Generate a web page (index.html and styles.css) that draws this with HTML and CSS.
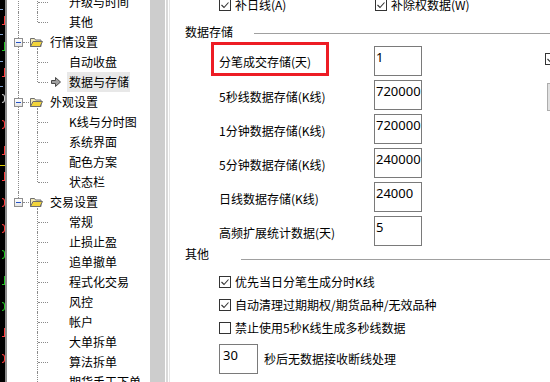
FILE: index.html
```html
<!DOCTYPE html>
<html lang="zh-CN">
<head>
    <meta charset="UTF-8">
    <meta name="viewport" content="width=device-width, initial-scale=1.0">
    <title>系统设置 - 数据与存储</title>
    <link rel="stylesheet" href="styles.css">
</head>
<body>
    <!-- обрезанная колонка котировок слева -->
    <div class="quote-strip">
        <div class="q red"></div>
        <div class="q green"></div>
        <div class="q red"></div>
        <div class="q white round"></div>
        <div class="q red round"></div>
        <div class="q red"></div>
        <div class="q red"></div>
        <div class="q red round"></div>
        <div class="q red round"></div>
        <div class="q green round"></div>
        <div class="q green"></div>
        <div class="q green round"></div>
        <div class="q red"></div>
        <div class="q red round"></div>
    </div>
    <div class="strip-edge"></div>

    <div class="tree">
        <div class="tree-list">
            <div class="row child v0 v1"><span class="hdots"></span><span class="icon"></span><span class="label">升级与时间</span></div>
            <div class="row child v0 v1-end"><span class="hdots"></span><span class="icon"></span><span class="label">其他</span></div>
            <div class="row top v0 v1-start">
                <span class="expander"><span class="minus"></span></span><span class="hdots short"></span>
                <svg class="folder" width="14" height="12" viewBox="0 0 14 12"><path d="M1.5 10.5V2.5h4l1 1.5h5.5v6.5z" fill="#f3eab8" stroke="#6e6e6e"/><path d="M1.5 10.5l2.5-5h9.5l-2.5 5z" fill="#f2d43a" stroke="#6e6e6e"/></svg>
                <span class="label">行情设置</span>
            </div>
            <div class="row child v0 v1"><span class="hdots"></span><span class="icon"></span><span class="label">自动收盘</span></div>
            <div class="row child v0 v1-end">
                <span class="hdots"></span>
                <span class="icon"><svg width="10" height="10" viewBox="0 0 10 10"><path d="M0.5 3.5h4v-3l5 4.5-5 4.5v-3h-4z" fill="#a0a0a0" stroke="#4a4a4a"/></svg></span>
                <span class="label selected">数据与存储</span>
            </div>
            <div class="row top v0 v1-start">
                <span class="expander"><span class="minus"></span></span><span class="hdots short"></span>
                <svg class="folder" width="14" height="12" viewBox="0 0 14 12"><path d="M1.5 10.5V2.5h4l1 1.5h5.5v6.5z" fill="#f3eab8" stroke="#6e6e6e"/><path d="M1.5 10.5l2.5-5h9.5l-2.5 5z" fill="#f2d43a" stroke="#6e6e6e"/></svg>
                <span class="label">外观设置</span>
            </div>
            <div class="row child v0 v1"><span class="hdots"></span><span class="icon"></span><span class="label">K线与分时图</span></div>
            <div class="row child v0 v1"><span class="hdots"></span><span class="icon"></span><span class="label">系统界面</span></div>
            <div class="row child v0 v1"><span class="hdots"></span><span class="icon"></span><span class="label">配色方案</span></div>
            <div class="row child v0 v1-end"><span class="hdots"></span><span class="icon"></span><span class="label">状态栏</span></div>
            <div class="row top v0-end v1-start">
                <span class="expander"><span class="minus"></span></span><span class="hdots short"></span>
                <svg class="folder" width="14" height="12" viewBox="0 0 14 12"><path d="M1.5 10.5V2.5h4l1 1.5h5.5v6.5z" fill="#f3eab8" stroke="#6e6e6e"/><path d="M1.5 10.5l2.5-5h9.5l-2.5 5z" fill="#f2d43a" stroke="#6e6e6e"/></svg>
                <span class="label">交易设置</span>
            </div>
            <div class="row child v1"><span class="hdots"></span><span class="icon"></span><span class="label">常规</span></div>
            <div class="row child v1"><span class="hdots"></span><span class="icon"></span><span class="label">止损止盈</span></div>
            <div class="row child v1"><span class="hdots"></span><span class="icon"></span><span class="label">追单撤单</span></div>
            <div class="row child v1"><span class="hdots"></span><span class="icon"></span><span class="label">程式化交易</span></div>
            <div class="row child v1"><span class="hdots"></span><span class="icon"></span><span class="label">风控</span></div>
            <div class="row child v1"><span class="hdots"></span><span class="icon"></span><span class="label">帐户</span></div>
            <div class="row child v1"><span class="hdots"></span><span class="icon"></span><span class="label">大单拆单</span></div>
            <div class="row child v1"><span class="hdots"></span><span class="icon"></span><span class="label">算法拆单</span></div>
            <div class="row child v1"><span class="hdots"></span><span class="icon"></span><span class="label">期货手工下单</span></div>
        </div>
    </div>
    <div class="scroll-track"></div>
    <div class="splitter"></div>

    <div class="panel">
        <div class="top-checks">
            <div class="check-item first"><span class="box"><svg width="10" height="10" viewBox="0 0 10 10"><path d="M1.5 5l2.5 2.5 4.5-5" fill="none" stroke="#333" stroke-width="1.1"/></svg></span>补日线(A)</div>
            <div class="check-item"><span class="box"><svg width="10" height="10" viewBox="0 0 10 10"><path d="M1.5 5l2.5 2.5 4.5-5" fill="none" stroke="#333" stroke-width="1.1"/></svg></span>补除权数据(W)</div>
        </div>

        <div class="section store"><span>数据存储</span><i class="rule"></i></div>

        <div class="fields">
            <div class="field">
                <span class="field-label marked">分笔成交存储(天)</span>
                <div class="edit">1</div>
                <span class="box side-check"><svg width="10" height="10" viewBox="0 0 10 10"><path d="M1.5 5l2.5 2.5 4.5-5" fill="none" stroke="#333" stroke-width="1.1"/></svg></span>
            </div>
            <div class="field">
                <span class="field-label">5秒线数据存储(K线)</span>
                <div class="edit">720000</div>
                <span class="side-btn"></span>
            </div>
            <div class="field">
                <span class="field-label">1分钟数据存储(K线)</span>
                <div class="edit">720000</div>
            </div>
            <div class="field">
                <span class="field-label">5分钟数据存储(K线)</span>
                <div class="edit">240000</div>
            </div>
            <div class="field">
                <span class="field-label">日线数据存储(K线)</span>
                <div class="edit">24000</div>
            </div>
            <div class="field">
                <span class="field-label">高频扩展统计数据(天)</span>
                <div class="edit">5</div>
            </div>
        </div>

        <div class="section other"><span>其他</span><i class="rule"></i></div>

        <div class="options">
            <div class="check-item"><span class="box"><svg width="10" height="10" viewBox="0 0 10 10"><path d="M1.5 5l2.5 2.5 4.5-5" fill="none" stroke="#333" stroke-width="1.1"/></svg></span>优先当日分笔生成分时K线</div>
            <div class="check-item"><span class="box"><svg width="10" height="10" viewBox="0 0 10 10"><path d="M1.5 5l2.5 2.5 4.5-5" fill="none" stroke="#333" stroke-width="1.1"/></svg></span>自动清理过期期权/期货品种/无效品种</div>
            <div class="check-item"><span class="box"></span>禁止使用5秒K线生成多秒线数据</div>
        </div>

        <div class="timeout">
            <div class="edit short">30</div>
            <span>秒后无数据接收断线处理</span>
        </div>
    </div>
</body>
</html>
```

FILE: styles.css
```css
body {
    margin: 0;
    width: 550px;
    height: 382px;
    overflow: hidden;
    display: flex;
    background: white;
    color: #000;
    font-family: "Noto Sans CJK SC", sans-serif;
    font-size: 12px;
    line-height: 16px;
}

/* котировки: видны только правые края цифр */
.quote-strip {
    width: 5px;
    flex: none;
    overflow: hidden;
    padding-top: 16px;
    background:
        linear-gradient(#7fa0d0, #7fa0d0) 0 9px / 3px 1px no-repeat,
        linear-gradient(#7fa0d0, #7fa0d0) 0 34px / 3px 1px no-repeat,
        linear-gradient(#7fa0d0, #7fa0d0) 0 61px / 3px 1px no-repeat,
        linear-gradient(#7fa0d0, #7fa0d0) 0 86px / 3px 1px no-repeat,
        linear-gradient(#e0d000, #e0d000) 0 165px / 5px 1px no-repeat,
        #000;
}
.q {
    display: flex;
    justify-content: flex-end;
    height: 26px;
}
.q::after {
    content: "";
    width: 3px;
    height: 9px;
    box-sizing: border-box;
    border-right: 1px solid currentColor;
    border-bottom: 1px solid currentColor;
}
.q.round::after {
    border-radius: 0 4px 4px 0;
    border-top: 1px solid currentColor;
}
.q.red { color: #ff3b3b; }
.q.green { color: #1fc41f; }
.q.white { color: #c8c8c8; }
.strip-edge {
    width: 2px;
    flex: none;
    background: #8c8c8c;
}

/* дерево */
.tree {
    width: 143px;
    flex: none;
    overflow: hidden;
}
.tree-list {
    margin-top: -8px;
}
.row {
    position: relative;
    height: 20px;
    display: flex;
    align-items: center;
    white-space: nowrap;
}
.v0::before, .v0-end::before, .v1::after, .v1-end::after, .v1-start::after {
    content: "";
    position: absolute;
    top: 0;
    bottom: 0;
    border-left: 1px dotted #8a8a8a;
}
.v0::before, .v0-end::before { left: 11px; }
.v1::after, .v1-end::after, .v1-start::after { left: 30px; }
.v0-end::before, .v1-end::after { bottom: 10px; }
.v1-start::after { top: 16px; }

.child { padding-left: 31px; }
.top { padding-left: 7px; }
.hdots {
    width: 10px;
    height: 0;
    border-top: 1px dotted #8a8a8a;
    flex: none;
}
.hdots.short { width: 6px; }
.icon {
    width: 18px;
    padding-left: 3px;
    flex: none;
    display: flex;
    align-items: center;
}
.expander {
    position: relative;
    width: 9px;
    height: 9px;
    box-sizing: border-box;
    border: 1px solid #8f8f8f;
    background: linear-gradient(#ffffff, #e4e4e4);
    display: flex;
    align-items: center;
    justify-content: center;
    flex: none;
}
.minus {
    width: 5px;
    height: 1px;
    background: #2452c4;
}
.folder {
    flex: none;
}
.top .label {
    margin-left: 7px;
}
.label {
    line-height: 20px;
}
.selected {
    background: #e8e8e8;
    padding: 0 1px 0 2px;
    margin-left: -2px;
}

.scroll-track {
    width: 15px;
    flex: none;
    background: #cdcdcd;
}
.splitter {
    width: 5px;
    flex: none;
    background: linear-gradient(to right, #fff 0 1px, #dadada 1px 3px, #fff 3px 4px, #e4e4e4 4px 5px);
}

/* правая панель */
.panel {
    width: 420px;
    flex: none;
}
.top-checks {
    display: flex;
    align-items: center;
    height: 16px;
    margin-top: -3px;
    padding-left: 49px;
}
.check-item {
    display: flex;
    align-items: center;
    gap: 4px;
    white-space: nowrap;
}
.check-item.first {
    width: 156px;
}
.box {
    width: 12px;
    height: 12px;
    box-sizing: border-box;
    border: 1px solid #333;
    background: white;
    display: flex;
    align-items: center;
    justify-content: center;
    flex: none;
}

.section {
    display: flex;
    align-items: center;
    height: 16px;
    padding-left: 15px;
}
.section.store { margin-top: 11px; }
.rule {
    flex: 1;
    border-top: 1px solid #a0a0a0;
}
.store .rule { margin-left: 21px; margin-top: 2px; }
.other .rule { margin-left: 32px; margin-top: 10px; }

.fields {
    display: flex;
    flex-direction: column;
    gap: 4px;
    margin-top: 6px;
    padding-left: 49px;
}
.field {
    display: flex;
    align-items: center;
    height: 30px;
}
.field-label {
    width: 155px;
    flex: none;
    box-sizing: border-box;
    padding-top: 4px;
    white-space: nowrap;
}
.marked {
    width: 118px;
    height: 34px;
    margin: 0 45px 4px -8px;
    border: 3px solid #ed1c24;
    padding: 9px 0 0 5px;
}
.edit {
    width: 48px;
    height: 30px;
    flex: none;
    box-sizing: border-box;
    border: 1px solid #7a7a7a;
    padding: 2px 0 0 1px;
    font-family: "Noto Sans", "Noto Sans CJK SC", sans-serif;
    font-size: 13px;
    line-height: 16px;
}
.edit.short {
    width: 39px;
    padding-left: 3px;
}
.side-check {
    margin: 0 0 4px 123px;
}
.side-btn {
    width: 40px;
    height: 28px;
    flex: none;
    box-sizing: border-box;
    margin: 4px 0 0 125px;
    background: #e1e1e1;
    border: 1px solid #adadad;
}

.options {
    margin-top: 8px;
    padding-left: 49px;
}
.options .check-item {
    height: 23px;
}
.timeout {
    display: flex;
    align-items: center;
    gap: 6px;
    margin-top: 5px;
    padding-left: 49px;
}
```
